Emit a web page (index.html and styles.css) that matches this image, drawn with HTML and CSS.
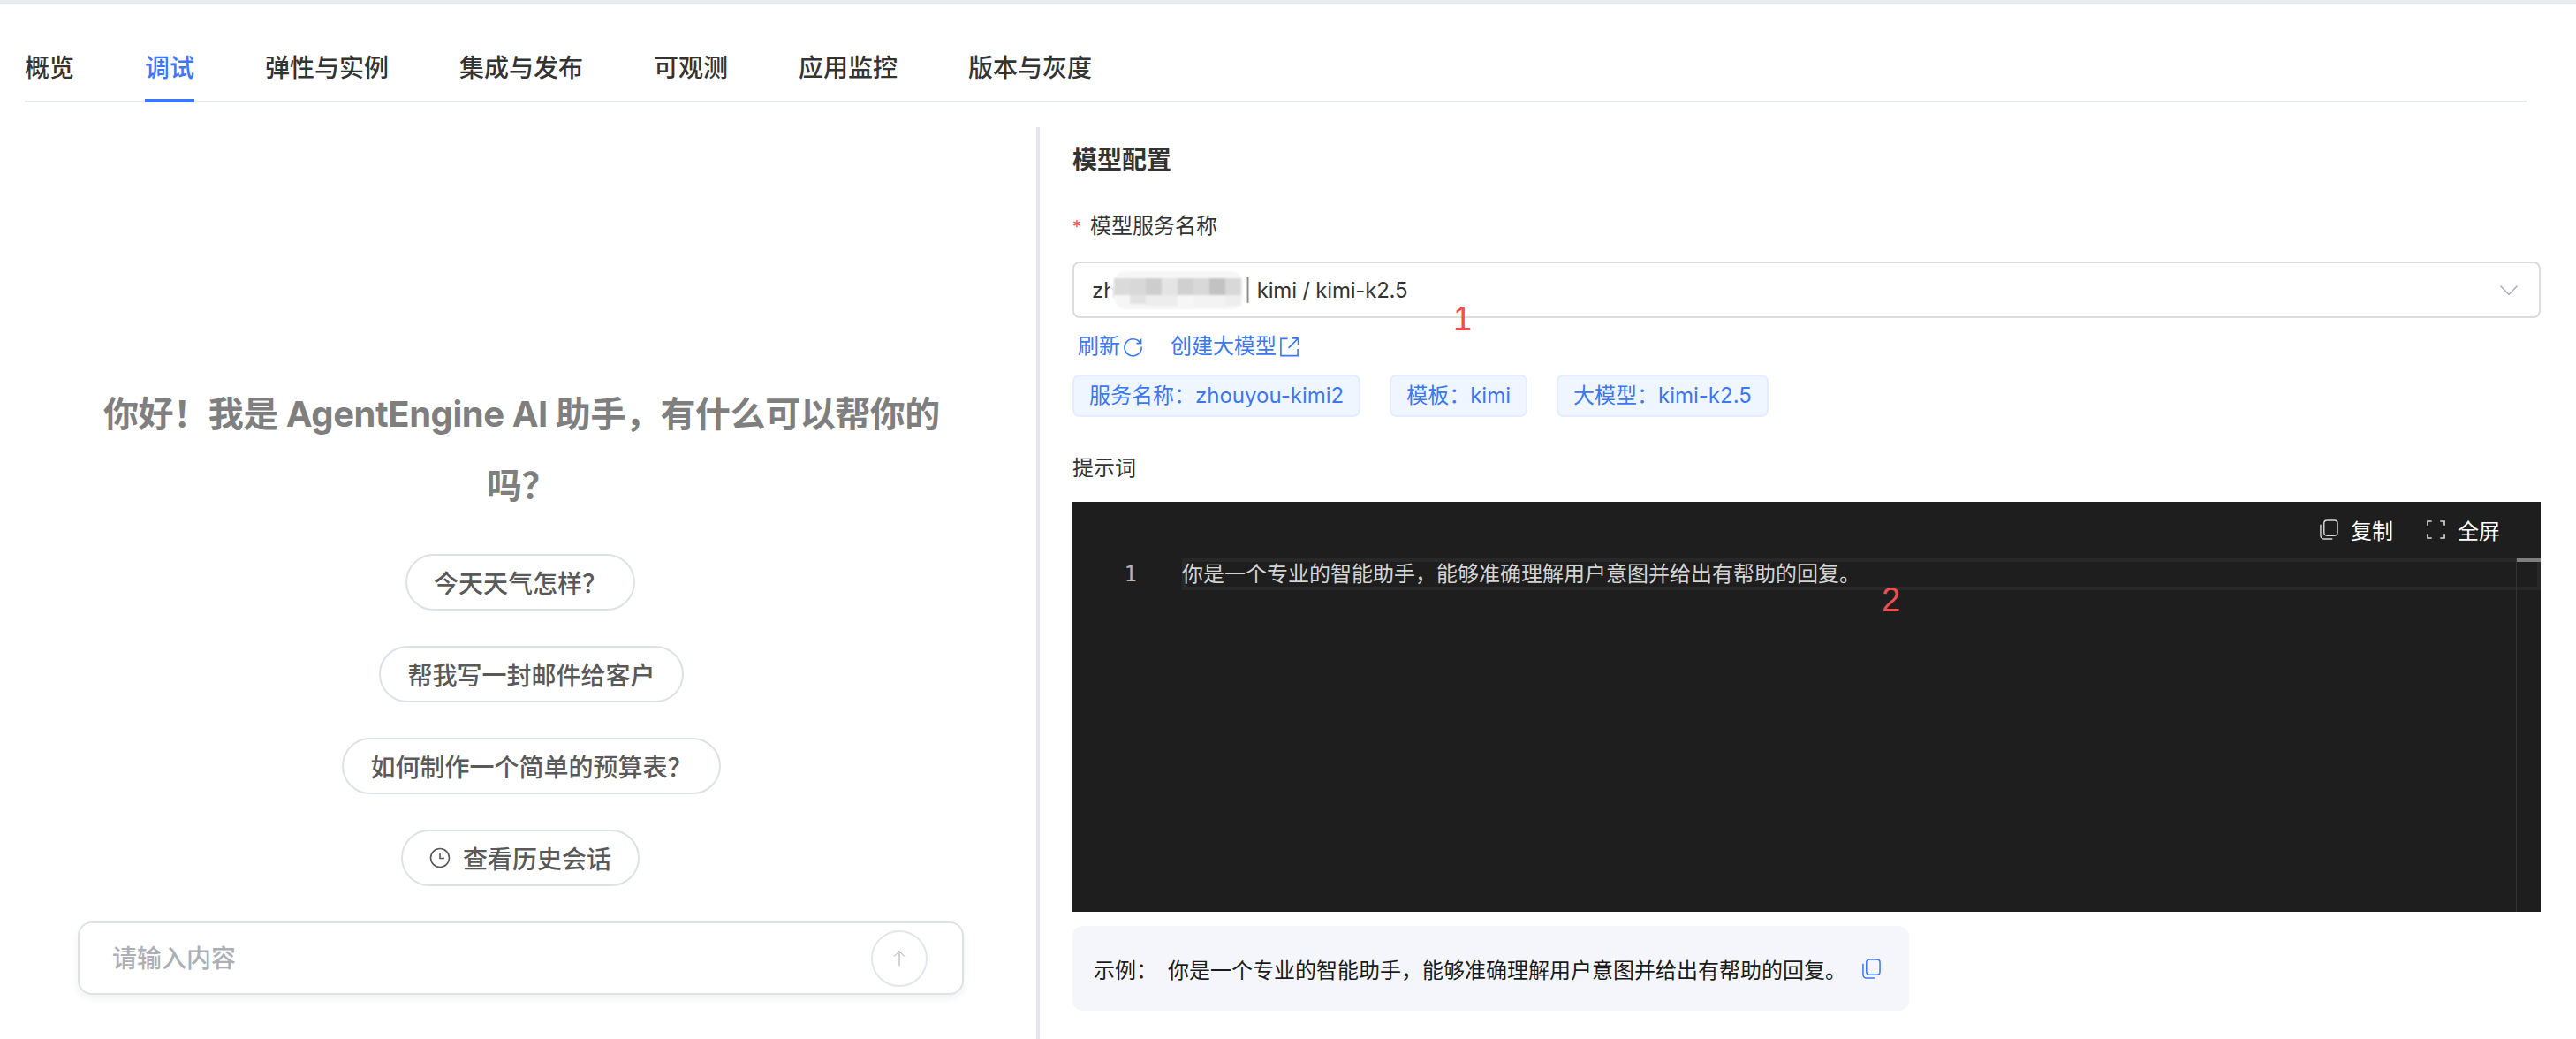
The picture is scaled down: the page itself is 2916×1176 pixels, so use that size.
FILE: index.html
```html
<!DOCTYPE html>
<html lang="zh-CN">
<head>
    <meta charset="UTF-8">
    <title>调试</title>
    <link rel="stylesheet" href="styles.css">
</head>
<body>
    <nav class="tabs">
        <a class="tab">概览</a>
        <a class="tab active">调试</a>
        <a class="tab">弹性与实例</a>
        <a class="tab">集成与发布</a>
        <a class="tab">可观测</a>
        <a class="tab">应用监控</a>
        <a class="tab">版本与灰度</a>
    </nav>

    <main class="main">
        <section class="chat">
            <h2 class="welcome">你好！我是 AgentEngine AI 助手，有什么可以帮你的吗？</h2>
            <button class="chip">今天天气怎样？</button>
            <button class="chip chip-off">帮我写一封邮件给客户</button>
            <button class="chip chip-off">如何制作一个简单的预算表？</button>
            <button class="chip">
                <svg class="chip-icon" viewBox="0 0 24 24" fill="none" stroke="currentColor" stroke-width="1.6">
                    <circle cx="12" cy="12" r="10.5"/>
                    <path d="M12 6v6.5h5"/>
                </svg>
                查看历史会话
            </button>
            <div class="chat-input">
                <span class="placeholder">请输入内容</span>
                <span class="send">
                    <svg viewBox="0 0 24 24" fill="none" stroke="currentColor" stroke-width="1.2">
                        <path d="M12 22V2M5 9l7-7 7 7"/>
                    </svg>
                </span>
            </div>
        </section>

        <section class="config">
            <h3 class="config-title">模型配置</h3>
            <div class="field-label"><span class="required">*</span>模型服务名称</div>

            <div class="select">
                <span>zh</span>
                <svg class="mosaic" viewBox="0 0 153 47">
                    <defs><filter id="soft"><feGaussianBlur stdDeviation="1.2"/></filter></defs>
                    <rect x="0" y="0" width="153" height="47" rx="16" fill="#fff" opacity="0.9"/>
                    <g filter="url(#soft)">
                        <rect x="4" y="2" width="146" height="43" rx="14" fill="#f6f6f6"/>
                        <rect x="4" y="10" width="18" height="19" fill="#dadada"/>
                        <rect x="22" y="10" width="18" height="19" fill="#d8d8d8"/>
                        <rect x="40" y="10" width="18" height="19" fill="#cdcdcd"/>
                        <rect x="58" y="10" width="18" height="19" fill="#e4e4e4"/>
                        <rect x="76" y="10" width="18" height="19" fill="#d0d0d0"/>
                        <rect x="94" y="10" width="18" height="19" fill="#d8d8d8"/>
                        <rect x="112" y="10" width="18" height="19" fill="#c2c2c2"/>
                        <rect x="130" y="10" width="18" height="19" fill="#d8d8d8"/>
                        <rect x="22" y="29" width="18" height="10" fill="#e2e2e2"/>
                        <rect x="40" y="29" width="36" height="12" fill="#ededed"/>
                        <rect x="94" y="29" width="36" height="14" fill="#f3f3f3"/>
                        <rect x="130" y="29" width="18" height="12" fill="#eeeeee"/>
                    </g>
                </svg>
                <span class="select-value"><span class="select-cut">|</span> kimi / kimi-k2.5</span>
                <svg class="chevron" viewBox="0 0 20 11" fill="none" stroke="currentColor" stroke-width="1.4">
                    <path d="M.5.5 10 10.5 19.5.5"/>
                </svg>
            </div>

            <div class="links">
                <a class="link">刷新
                    <svg viewBox="0 0 24 24" fill="none" stroke="currentColor" stroke-width="1.7">
                        <path d="M20.5 7.5A10 10 0 1 0 22 12"/>
                        <path d="M21.5 2.5v5.5H16"/>
                    </svg>
                </a>
                <a class="link">创建大模型
                    <svg viewBox="0 0 24 24" fill="none" stroke="currentColor" stroke-width="1.7">
                        <path d="M10 2.500H2v20h20v-8"/>
                        <path d="M15 2h7.500v7.500M22 2.500 11 13.500"/>
                    </svg>
                </a>
            </div>

            <div class="tags">
                <span class="tag">服务名称：zhouyou-kimi2</span>
                <span class="tag">模板：kimi</span>
                <span class="tag">大模型：kimi-k2.5</span>
            </div>

            <div class="field-label prompt-label">提示词</div>

            <div class="editor">
                <div class="editor-bar">
                    <span class="editor-btn">
                        <svg viewBox="0 0 22 24" fill="none" stroke="currentColor" stroke-width="1.5">
                            <rect x="5" y="1" width="16" height="18" rx="3.500"/>
                            <path d="M1 6v13a4 4 0 0 0 4 4h10"/>
                        </svg>
                        复制
                    </span>
                    <span class="editor-btn">
                        <svg viewBox="0 0 22 22" fill="none" stroke="currentColor" stroke-width="1.700">
                            <path d="M1 6V1h5M16 1h5v5M21 16v5h-5M6 21H1v-5"/>
                        </svg>
                        全屏
                    </span>
                </div>
                <div class="code-row">
                    <span class="line-no">1</span>
                    <div class="code-line">你是一个专业的智能助手，能够准确理解用户意图并给出有帮助的回复。</div>
                </div>
                <div class="scroll-track"></div>
                <div class="scroll-thumb"></div>
            </div>

            <div class="example">
                <span class="example-label">示例：</span>
                <span>你是一个专业的智能助手，能够准确理解用户意图并给出有帮助的回复。</span>
                <svg class="example-copy" viewBox="0 0 22 24" fill="none" stroke="currentColor" stroke-width="1.600">
                    <rect x="5" y="1" width="16" height="18" rx="3.500"/>
                    <path d="M1 6v13a4 4 0 0 0 4 4h10"/>
                </svg>
            </div>
        </section>
    </main>

    <div class="mark mark-one">1</div>
    <div class="mark mark-two">2</div>
</body>
</html>
```

FILE: styles.css
```css
* {
    box-sizing: border-box;
}
html, body {
    margin: 0;
    height: 1176px;
    overflow: hidden;
}
body {
    border-top: 4px solid #e9ebee;
    background-color: #fff;
    color: #333;
    font-family: Inter, "Noto Sans CJK SC", sans-serif;
    font-size: 24px;
    position: relative;
}

/* tabs */
.tabs {
    display: flex;
    gap: 80px;
    margin: 0 56px 0 28px;
    padding-top: 53px;
    border-bottom: 2px solid #e4e7ee;
}
.tab {
    position: relative;
    font-size: 28px;
    font-weight: 500;
    line-height: 40px;
    padding-bottom: 17px;
    color: #333;
}
.tab.active {
    color: #3b78ff;
}
.tab.active::after {
    content: "";
    position: absolute;
    left: 0;
    right: 0;
    bottom: -2px;
    height: 4px;
    background-color: #3b78ff;
}

.main {
    display: flex;
    margin-top: 28px;
    height: 1032px;
}

/* left column */
.chat {
    width: 1173px;
    flex-shrink: 0;
    display: flex;
    flex-direction: column;
    align-items: center;
    justify-content: flex-end;
    gap: 40px;
    padding: 0 81px 50px 89px;
}
.welcome {
    margin: 0 0 -3px;
    padding: 0 20px;
    font-size: 40px;
    font-weight: 700;
    line-height: 81px;
    letter-spacing: -0.45px;
    text-align: center;
    color: #7f7f7f;
}
.chip {
    display: flex;
    align-items: center;
    gap: 14px;
    height: 64px;
    margin-left: -3px;
    padding: 0 30px;
    border: 2px solid #dfe1e9;
    border-radius: 32px;
    background-color: #fff;
    color: #595959;
    font-family: inherit;
    font-size: 28px;
    font-weight: 500;
}
.chip-off {
    margin-left: 22px;
}
.chip-icon {
    width: 24px;
    height: 24px;
}
.chat-input {
    width: 1003px;
    height: 83px;
    margin-left: -2px;
    display: flex;
    align-items: center;
    justify-content: space-between;
    padding: 0 39px 0 37px;
    border: 2px solid #dfe1e9;
    border-radius: 16px;
    box-shadow: 0 4px 10px rgba(0, 0, 0, 0.06);
}
.placeholder {
    padding-bottom: 4px;
    font-size: 28px;
    font-weight: 500;
    color: #adafb7;
}
.send {
    width: 64px;
    height: 64px;
    display: flex;
    align-items: center;
    justify-content: center;
    border: 2px solid #e4e6ed;
    border-radius: 50%;
    color: #a4a6ae;
}
.send svg {
    width: 20px;
    height: 24px;
}

/* right column */
.config {
    flex: 1;
    min-width: 0;
    border-left: 4px solid #e3e6ee;
    padding: 17px 40px 0 37px;
}
.config-title {
    margin: 0;
    font-size: 28px;
    font-weight: 700;
    line-height: 40px;
    color: #333;
}
.field-label {
    margin-top: 38px;
    line-height: 32px;
    color: #333;
}
.config-title + .field-label {
    margin-top: 39px;
}
.required {
    color: #f5484f;
    font-size: 20px;
    margin-right: 10px;
}
.select {
    display: flex;
    align-items: center;
    height: 64px;
    margin-top: 23px;
    padding: 0 24px 0 20px;
    border: 2px solid #dcdcdc;
    border-radius: 8px;
    color: #333;
}
.mosaic {
    width: 153px;
    height: 47px;
    margin-left: -6px;
}
.select-value {
    flex: 1;
    white-space: pre;
    margin-left: -2px;
    letter-spacing: -0.2px;
}
.select-cut {
    color: #8c8c8c;
}
.chevron {
    width: 20px;
    height: 11px;
    color: #a8abb2;
}
.links {
    display: flex;
    gap: 31px;
    margin-top: 16px;
    padding-left: 6px;
    line-height: 32px;
}
.link {
    display: flex;
    align-items: center;
    gap: 3px;
    color: #3b78f5;
}
.link svg {
    width: 23px;
    height: 23px;
}
.tags {
    display: flex;
    gap: 33px;
    margin-top: 16px;
}
.tag {
    height: 48px;
    line-height: 44px;
    padding: 0 17px;
    border: 2px solid #e3edff;
    border-radius: 8px;
    background-color: #f0f6ff;
    color: #3b78f5;
}
.prompt-label {
    margin-top: 42px;
}

/* editor */
.editor {
    position: relative;
    height: 464px;
    margin-top: 22px;
    background-color: #1e1e1e;
}
.editor-bar {
    display: flex;
    justify-content: flex-end;
    align-items: center;
    gap: 38px;
    height: 64px;
    padding: 0 46px 2px 0;
    color: #fff;
}
.editor-btn {
    display: flex;
    align-items: center;
    gap: 14px;
}
.editor-btn svg {
    width: 21px;
    height: 23px;
    color: #d8d8d8;
}
.code-row {
    display: flex;
    height: 36px;
    font-family: "DejaVu Sans Mono", "Noto Sans CJK SC", monospace;
    line-height: 36px;
}
.line-no {
    width: 124px;
    padding-right: 51px;
    text-align: right;
    color: #b4b4b4;
}
.code-line {
    flex: 1;
    color: #d4d4d4;
    box-shadow: inset 0 0 0 4px #282828;
}
.scroll-track {
    position: absolute;
    top: 64px;
    bottom: 0;
    right: 27px;
    width: 1px;
    background-color: #333;
}
.scroll-thumb {
    position: absolute;
    top: 64px;
    right: 0;
    width: 27px;
    height: 4px;
    background-color: #7f7f7f;
}

.example {
    display: flex;
    align-items: center;
    width: fit-content;
    height: 96px;
    margin-top: 16px;
    padding: 0 32px 0 24px;
    border-radius: 12px;
    background-color: #f5f6fb;
    color: #1a1a1a;
}
.example-label {
    margin-right: 12px;
}
.example-copy {
    width: 21px;
    height: 23px;
    margin-left: 18px;
    color: #3b78f5;
}

/* red numbers drawn over the shot */
.mark {
    position: absolute;
    font-family: "Liberation Sans", sans-serif;
    font-size: 38px;
    line-height: 38px;
    color: #f24d50;
}
.mark-one {
    left: 1645px;
    top: 338px;
}
.mark-two {
    left: 2130px;
    top: 656px;
}
```
